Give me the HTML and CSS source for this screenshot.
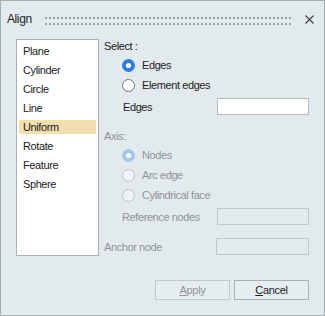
FILE: index.html
```html
<!DOCTYPE html>
<html>
<head>
<meta charset="utf-8">
<link rel="stylesheet" href="styles.css">
</head>
<body>
<div class="window">
  <div class="titlebar">
    <span class="title">Align</span>
    <svg class="grip" width="248" height="8" viewBox="0 0 248 8">
      <defs>
        <pattern id="dots" width="4" height="6" patternUnits="userSpaceOnUse">
          <rect x="0" y="0" width="2" height="2" fill="#9aa1a6"/>
        </pattern>
      </defs>
      <rect x="0" y="0" width="248" height="8" fill="url(#dots)"/>
    </svg>
    <svg class="close" width="9" height="9" viewBox="0 0 9 9">
      <path d="M0.5 0.5 L8.5 8.5 M8.5 0.5 L0.5 8.5" stroke="#3a3f44" stroke-width="1.1"/>
    </svg>
  </div>
  <div class="main">
    <ul class="list">
      <li><span>Plane</span></li>
      <li><span>Cylinder</span></li>
      <li><span>Circle</span></li>
      <li><span>Line</span></li>
      <li class="selected"><span>Uniform</span></li>
      <li><span>Rotate</span></li>
      <li><span>Feature</span></li>
      <li><span>Sphere</span></li>
    </ul>
    <div class="panel">
      <div class="label">Select :</div>
      <div class="radios">
        <div class="radio">
          <svg width="13" height="13" viewBox="0 0 13 13"><circle cx="6.5" cy="6.5" r="6.5" fill="#2a7de4"/><circle cx="6.5" cy="6.5" r="2.6" fill="#fff"/></svg>
          <span>Edges</span>
        </div>
        <div class="radio">
          <svg width="13" height="13" viewBox="0 0 13 13"><circle cx="6.5" cy="6.5" r="6" fill="#fff" stroke="#6e7378" stroke-width="1"/></svg>
          <span>Element edges</span>
        </div>
      </div>
      <div class="field field-edges">
        <span class="field-label">Edges</span>
        <span class="input"></span>
      </div>
      <div class="label label-axis">Axis:</div>
      <div class="radios disabled">
        <div class="radio">
          <svg width="13" height="13" viewBox="0 0 13 13"><circle cx="6.5" cy="6.5" r="6.5" fill="#a3c6f1"/><circle cx="6.5" cy="6.5" r="2.6" fill="#fff"/></svg>
          <span>Nodes</span>
        </div>
        <div class="radio">
          <svg width="13" height="13" viewBox="0 0 13 13"><circle cx="6.5" cy="6.5" r="6" fill="#f1f4f6" stroke="#bcc1c5" stroke-width="1"/></svg>
          <span>Arc edge</span>
        </div>
        <div class="radio">
          <svg width="13" height="13" viewBox="0 0 13 13"><circle cx="6.5" cy="6.5" r="6" fill="#f1f4f6" stroke="#bcc1c5" stroke-width="1"/></svg>
          <span>Cylindrical face</span>
        </div>
      </div>
      <div class="field field-ref disabled">
        <span class="field-label">Reference nodes</span>
        <span class="input"></span>
      </div>
      <div class="field field-anchor disabled">
        <span class="field-label">Anchor node</span>
        <span class="input"></span>
      </div>
    </div>
  </div>
  <div class="footer">
    <button class="btn btn-disabled"><u>A</u>pply</button>
    <button class="btn"><u>C</u>ancel</button>
  </div>
</div>
</body>
</html>
```

FILE: styles.css
```css
* { box-sizing: border-box; }
html, body { margin: 0; padding: 0; }
body {
  font-family: "Liberation Sans", Arial, sans-serif;
  font-size: 11px;
  letter-spacing: -0.4px;
  color: #1b1b1b;
  background: #e3eaed;
}
.window {
  width: 325px;
  height: 316px;
  border: 1px solid #a6adb2;
  background: #e3eaed;
  display: flex;
  flex-direction: column;
}
.titlebar {
  height: 36px;
  display: flex;
  align-items: center;
  padding-left: 6px;
}
.title {
  font-size: 12px;
  width: 38px;
  color: #1c1c28;
}
.grip {
  display: block;
  margin-top: 3px;
}
.close {
  display: block;
  margin-left: 12px;
  margin-top: 0px;
}
.main {
  display: flex;
  margin-top: 2px;
  padding-left: 15px;
  padding-right: 15px;
}
.list {
  list-style: none;
  margin: 0;
  padding: 1px 2px 0 2px;
  width: 83px;
  height: 217px;
  background: #fff;
  border: 1px solid #aab1b6;
}
.list li {
  height: 19px;
  display: flex;
  align-items: center;
}
.list li span {
  display: block;
  width: 100%;
  height: 14px;
  line-height: 14px;
  padding-left: 4px;
}
.list li.selected span {
  background: #f1dfae;
}
.panel {
  flex: 1;
  margin-left: 5px;
  display: flex;
  flex-direction: column;
}
.label {
  height: 14px;
  line-height: 14px;
}
.label-axis {
  margin-top: 14px;
  color: #8e9397;
}
.radios {
  margin-top: 2px;
  padding-left: 18px;
}
.radio {
  height: 20px;
  display: flex;
  align-items: center;
}
.radio svg {
  display: block;
  margin-right: 7px;
}
.disabled, .disabled .radio, .disabled .field-label {
  color: #8e9397;
}
.field {
  display: flex;
  align-items: center;
  justify-content: space-between;
  height: 17px;
}
.field-edges {
  margin-top: 3px;
  padding-left: 19px;
}
.field-ref {
  margin-top: 3px;
  padding-left: 18px;
}
.field-anchor {
  margin-top: 13px;
}
.input {
  display: block;
  width: 92px;
  height: 17px;
  background: #fff;
  border: 1px solid #b5babe;
}
.disabled .input {
  background: #e3eaed;
  border-color: #c2c7ca;
}
.field-anchor .input {
  width: 93px;
}
.footer {
  display: flex;
  justify-content: flex-end;
  gap: 4px;
  margin-top: 24px;
  padding-right: 15px;
}
.btn {
  width: 75px;
  height: 20px;
  font-family: "Liberation Sans", Arial, sans-serif;
  font-size: 11px;
  letter-spacing: -0.3px;
  color: #1b1b1b;
  background: #e6edf0;
  border: 1px solid #a9aeb2;
  border-radius: 0;
  padding: 0;
}
.btn-disabled {
  color: #8e9397;
  border-color: #c3c8cb;
}
.btn u { text-decoration-thickness: 1px; text-underline-offset: 1px; }
```
